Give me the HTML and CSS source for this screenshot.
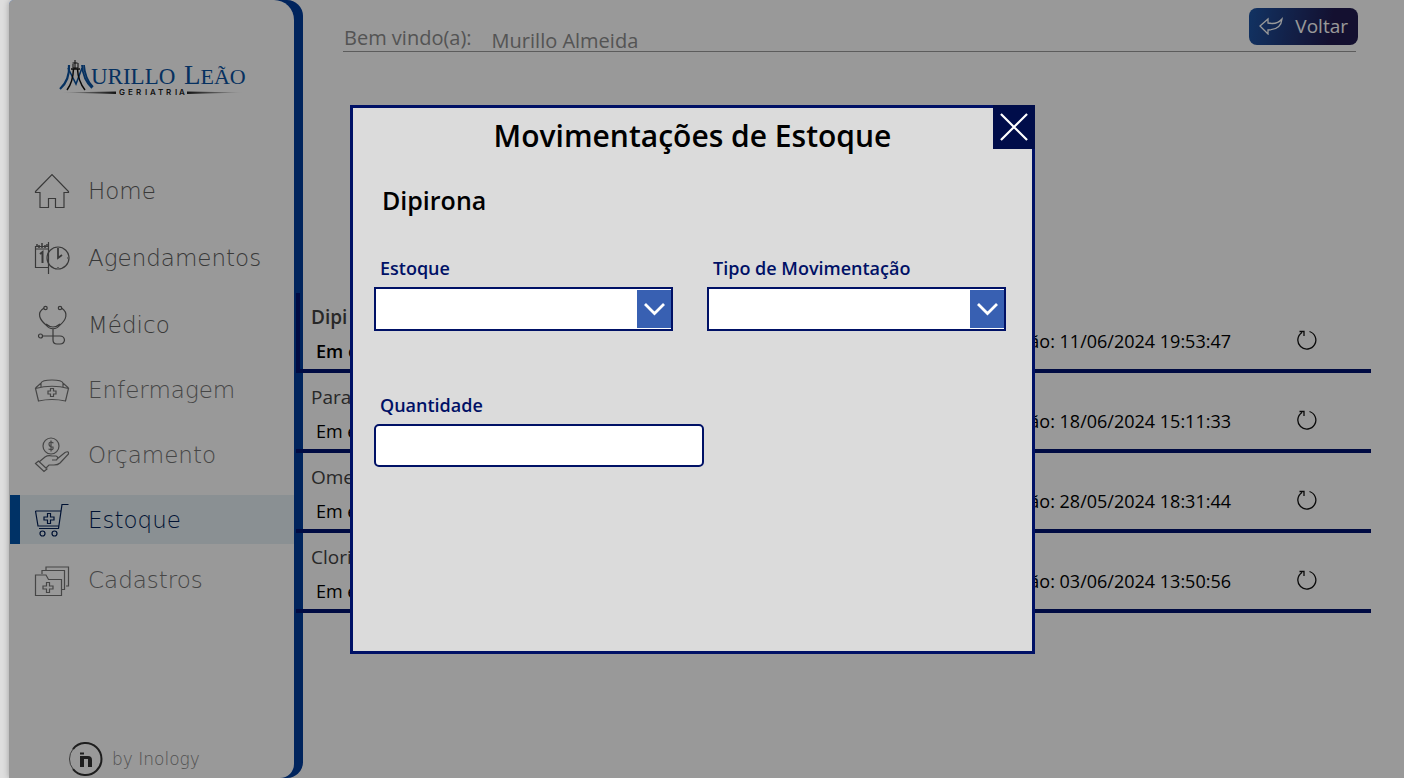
FILE: index.html
```html
<!DOCTYPE html>
<html lang="pt-BR">
<head>
<meta charset="utf-8">
<title>Movimentações de Estoque</title>
<meta name="viewport" content="width=device-width, initial-scale=1">
<link rel="stylesheet" href="styles.css">
</head>
<body>
<div class="app">
  <aside class="sidebar">
    <div class="panel">
      <svg class="logo" viewBox="0 0 190 42" role="img" aria-label="Murillo Leão Geriatria">
        <defs>
          <linearGradient id="fadeL"><stop offset="0" stop-color="#222" stop-opacity="0"/><stop offset="1" stop-color="#222"/></linearGradient>
          <linearGradient id="fadeR"><stop offset="0" stop-color="#222"/><stop offset="1" stop-color="#222" stop-opacity="0"/></linearGradient>
        </defs>
        <g fill="none" stroke="#0a52a0">
          <path d="M2 33Q12 24 11 9" stroke-width="2.2"/>
          <path d="M10 12L18 28L24 12" stroke-width="1.6"/>
          <path d="M24 9Q25 24 34 32M26 9Q27 23 35 31" stroke-width="1.8"/>
        </g>
        <g fill="none" stroke="#111">
          <path d="M17 4V13M14.500 7H19.500M15 8V12H20V7" stroke-width="1"/>
          <path d="M13 13H22M15.500 13Q15 26 9 34M19.500 13Q20 25 27 34" stroke-width="1.500"/>
        </g>
        <text class="logo-name" x="33" y="28" font-size="23">URILLO</text>
        <text class="logo-name" x="126" y="28" font-size="27">L<tspan font-size="22">EÃO</tspan></text>
        <path d="M2 36.500L58 35.500V38Z" fill="url(#fadeL)"/>
        <path d="M129 35.500L186 36.500L129 38Z" fill="url(#fadeR)"/>
        <text class="logo-sub" y="39" x="61 70 78 87 92 100 108 117 121">GERIATRIA</text>
      </svg>
      <nav class="nav">
        <a class="link dark" href="#"><svg viewBox="0 0 36 36"><path d="M1.500 18.500L18 1.500L34.500 18.500V19.500H30V34.500H21.500V25.500H14.500V34.500H6V19.500H1.500Z"/></svg>Home</a>
        <a class="link dark" href="#"><svg viewBox="0 0 36 36"><path d="M14 6.500H1.500V27.500H14M2 9H14M14.500 2V34"/><path d="M3 7V4M5 8V5M8 8V3M11 8V5M13 7V4" stroke-width="1.500"/><path d="M6 14L8.500 12V23" stroke-width="2"/><circle cx="24" cy="18" r="11"/><path d="M24 8V18L28 15" stroke-width="1.800"/><path d="M34 18H33M24 28V27M15 18H14"/></svg>Agendamentos</a>
        <a class="link dark" href="#"><svg class="tall" viewBox="0 0 36 42"><circle cx="11.500" cy="4" r="1.700"/><circle cx="26" cy="4" r="1.700"/><path d="M10 4C2 9 6 16 12 21C16 26 22 26 26 21C32 16 35 9 27.500 4M12 20Q19 26 26 20M19 25V36Q19 40 23 40H26Q30 40 30.500 36Q30 32 26 32H8"/><circle cx="6.500" cy="32" r="2"/></svg>Médico</a>
        <a class="link" href="#"><svg viewBox="0 0 36 36"><path d="M4.500 29L1.500 16.500Q18 12 34.500 16.500L31.500 29Q18 26 4.500 29ZM1.500 16L7 11V15M34.500 16L29 11V15M7 11Q8 8 18 8T29 11"/><path d="M16.500 16.500H19.500V19H22V22H19.500V24.500H16.500V22H14V19H16.500Z"/></svg>Enfermagem</a>
        <a class="link" href="#"><svg viewBox="0 0 36 36"><circle cx="17" cy="9" r="8"/><path d="M19.500 6Q15 4 15 7T19 10Q20 14 14.500 12M17 3.500V14.500"/><path d="M1.500 26.500L4.500 24L13 32L10 34.500ZM5 25L11 20Q14 18 18 19H22Q25 20 22.500 23H18M23 22L31 15.500Q35 13.500 34.500 17L26 26Q24 28 20 28H15L12 31"/></svg>Orçamento</a>
        <a class="link active" href="#" aria-current="page"><svg viewBox="0 0 36 36"><path d="M34.500 2.500H28L24.500 26.500H5M1.500 9H27M1.500 9L4 24H25"/><path d="M13.500 11.500H16.500V15H20V18H16.500V21.500H13.500V18H10V15H13.500Z"/><circle cx="8.500" cy="31.500" r="2.500"/><circle cx="20.500" cy="31.500" r="2.500"/></svg>Estoque</a>
        <a class="link" href="#"><svg viewBox="0 0 36 36"><path d="M1.500 33.500V13H12L14.500 17.500H27.500V33.500ZM8 12V8.500H30.500V27.500H28M12 8V5H34.500V24H32"/><path d="M12.500 20.500H15.500V24H19V27H15.500V30.500H12.500V27H9V24H12.500Z"/></svg>Cadastros</a>
      </nav>
      <div class="credit">
        <svg viewBox="0 0 36 36" aria-hidden="true"><path d="M5 8A16 16 0 1 1 5 28" fill="none" stroke="#333" stroke-width="2"/><path d="M5 8A16 16 0 0 0 5 28" fill="none" stroke="#666" stroke-width="1"/><path d="M12 15H16V26H12ZM12 11.500H16V13.500H12ZM16 15H20Q24 15 24 19V26H20V18H16Z" fill="#333"/></svg>
        <span>by Inology</span>
      </div>
    </div>
  </aside>
  <main class="main">
    <header class="top">
      <span>Bem vindo(a):</span>
      <span class="user">Murillo Almeida</span>
      <button class="back" type="button"><svg viewBox="0 0 24 18" aria-hidden="true"><path d="M1 9L9 2V6Q18 8 23 2Q22 13 9 13V17Z"/></svg>Voltar</button>
    </header>
    <ul class="stock">
      <li class="row selected"><div><h3>Dipi</h3><p>Em e</p></div><span class="date">ão: 11/06/2024 19:53:47</span><button class="refresh" type="button" aria-label="Atualizar"><svg viewBox="0 0 20 20"><path d="M12.500 1.500A9 9 0 1 1 5 2.500M2.500 1.500H7V6"/></svg></button></li>
      <li class="row"><div><h3>Para</h3><p>Em e</p></div><span class="date">ão: 18/06/2024 15:11:33</span><button class="refresh" type="button" aria-label="Atualizar"><svg viewBox="0 0 20 20"><path d="M12.500 1.500A9 9 0 1 1 5 2.500M2.500 1.500H7V6"/></svg></button></li>
      <li class="row"><div><h3>Ome</h3><p>Em e</p></div><span class="date">ão: 28/05/2024 18:31:44</span><button class="refresh" type="button" aria-label="Atualizar"><svg viewBox="0 0 20 20"><path d="M12.500 1.500A9 9 0 1 1 5 2.500M2.500 1.500H7V6"/></svg></button></li>
      <li class="row"><div><h3>Clori</h3><p>Em e</p></div><span class="date">ão: 03/06/2024 13:50:56</span><button class="refresh" type="button" aria-label="Atualizar"><svg viewBox="0 0 20 20"><path d="M12.500 1.500A9 9 0 1 1 5 2.500M2.500 1.500H7V6"/></svg></button></li>
    </ul>
  </main>
  <div class="overlay">
    <section class="modal" role="dialog" aria-labelledby="title">
      <button class="close" type="button" aria-label="Fechar"><svg viewBox="0 0 30 30"><path d="M1 1L29 29M29 1L1 29"/></svg></button>
      <h1 id="title">Movimentações de Estoque</h1>
      <h2>Dipirona</h2>
      <form class="form">
        <div class="field">
          <label for="estoque">Estoque</label>
          <div class="select">
            <select id="estoque"><option></option></select>
            <svg viewBox="0 0 34 38" aria-hidden="true"><path d="M8 14L17.500 23.500L27 14"/></svg>
          </div>
        </div>
        <div class="field">
          <label for="tipo">Tipo de Movimentação</label>
          <div class="select">
            <select id="tipo"><option></option></select>
            <svg viewBox="0 0 34 38" aria-hidden="true"><path d="M8 14L17.500 23.500L27 14"/></svg>
          </div>
        </div>
        <div class="field wide">
          <label for="quantidade">Quantidade</label>
          <input id="quantidade" type="text">
        </div>
      </form>
    </section>
  </div>
</div>
</body>
</html>
```
FILE: styles.css
```css
* { box-sizing: border-box; }

body {
  margin: 0;
  background: #dedede;
  font-family: "Open Sans", "Noto Sans", sans-serif;
  color: #000;
}

h1, h2, h3, p, ul { margin: 0; padding: 0; }
button { font: inherit; cursor: pointer; }

.app {
  position: relative;
  display: flex;
  min-height: 100vh;
  margin-left: 9px;
  background: #fff;
  border-top-left-radius: 5px;
  box-shadow: 0 0 6px rgba(0, 0, 0, .3);
  overflow: hidden;
}

/* Sidebar */
.sidebar {
  display: flex;
  flex: 0 0 294px;
  padding-right: 9px;
  background: #003c9c;
  border-radius: 0 16px 16px 0;
}

.panel {
  display: flex;
  flex: 1;
  flex-direction: column;
  background: #fff;
  border-radius: 0 20px 14px 0;
}

.logo {
  width: 190px;
  height: 42px;
  margin: 56px 0 0 49px;
}

.logo-name { font-family: "Liberation Serif", serif; fill: #0a52a0; }
.logo-sub { font: 600 8px Inter, sans-serif; fill: #222; }

.nav {
  display: grid;
  grid-template-rows: 66px 67px 67px 64px 65px 65px 56px;
  align-items: center;
  margin: 60px 0 0 1px;
}

.link {
  display: flex;
  align-items: center;
  gap: 18px;
  height: 49px;
  padding-left: 24px;
  color: #757575;
  font: 200 23px "DejaVu Sans Light", "DejaVu Sans", sans-serif;
  text-decoration: none;
}

.link svg {
  width: 36px;
  height: 36px;
  fill: none;
  stroke: currentColor;
  stroke-width: 1.2;
}

.link svg.tall { height: 42px; }
.link.dark { color: #606060; }

.link.active {
  padding-left: 14px;
  border-left: 10px solid #0054aa;
  background: #e7f0f6;
  color: #001f55;
}

.credit {
  display: flex;
  align-items: center;
  gap: 8px;
  margin-top: auto;
  padding: 0 0 1px 59px;
  color: #888;
  font: 200 17px/20px "DejaVu Sans Light", "DejaVu Sans", sans-serif;
}

.credit svg { width: 36px; height: 36px; }

/* Main area */
.main { flex: 1; min-width: 0; }

.top {
  display: flex;
  align-items: flex-start;
  height: 52px;
  margin: 0 48px 0 40px;
  padding-top: 8px;
  border-bottom: 1px solid #999;
  color: #8c8c8c;
  font-size: 20px;
  line-height: 28px;
}

.top span { padding: 16px 0 0 1px; }
.top .user { padding: 19px 0 0 20px; }

.back {
  display: flex;
  align-items: center;
  gap: 12px;
  height: 37px;
  margin: 0 -2px 0 auto;
  padding: 0 10px 2px;
  border: 0;
  border-radius: 8px;
  background: linear-gradient(100deg, #1d55a5, #221b50 75%);
  color: #fff;
  font-size: 19px;
}

.back svg { width: 24px; height: 18px; fill: none; stroke: #fff; stroke-width: 1.3; }

.stock {
  position: relative;
  margin: 241px 33px 0 -7px;
  list-style: none;
}

.row {
  display: flex;
  align-items: center;
  height: 80px;
  padding: 6px 52px 0 15px;
  border-bottom: 4px solid #001370;
  font-size: 18px;
}

.row h3 {
  color: #444;
  font-size: 19px;
  font-weight: 400;
  line-height: 34px;
}

.row p { padding-left: 5px; line-height: 34px; }

.row.selected {
  padding-left: 11px;
  border-left: 4px solid #001370;
}

.selected h3, .selected p { font-weight: 600; }
.date { margin: 14px 64px 0 auto; }

.refresh {
  display: flex;
  width: 24px;
  margin-top: 12px;
  padding: 2px;
  border: 0;
  background: none;
}

.refresh svg { width: 20px; height: 20px; fill: none; stroke: #111; stroke-width: 1.3; }

/* Dialog */
.overlay {
  position: absolute;
  inset: 0;
  display: flex;
  align-items: flex-start;
  justify-content: center;
  padding: 105px 28px 0 0;
  background: rgba(0, 0, 0, .4);
}

.modal {
  position: relative;
  width: 685px;
  min-height: 549px;
  padding: 7px 26px 24px 21px;
  border: 3px solid #001166;
  background: #dbdbdb;
}

.modal h1 {
  margin-left: 5px;
  font-size: 30px;
  font-weight: 600;
  line-height: 42px;
  text-align: center;
}

.modal h2 {
  margin: 25px 0 0 8px;
  font-size: 25px;
  font-weight: 600;
  line-height: 36px;
}

.close {
  position: absolute;
  top: -3px;
  right: -3px;
  display: flex;
  padding: 8px 6px;
  border: 0;
  background: #000d4a;
}

.close svg { width: 30px; height: 28px; stroke: #fff; stroke-width: 2.4; }

.form {
  display: grid;
  grid-template-columns: 1fr 1fr;
  gap: 62px 34px;
  margin-top: 38px;
}

.field { display: flex; flex-direction: column; gap: 7px; }

.field label {
  padding-left: 6px;
  color: #001166;
  font-size: 18px;
  font-weight: 600;
  line-height: 24px;
}

.field.wide { grid-column: 1 / -1; }

.select { display: grid; }

.select select {
  grid-area: 1 / 1;
  height: 44px;
  padding: 0 44px 0 10px;
  border: 2px solid #001166;
  border-radius: 0;
  background: #fff;
  font: inherit;
  appearance: none;
}

.select svg {
  grid-area: 1 / 1;
  justify-self: end;
  width: 34px;
  height: 38px;
  margin: 3px 2px;
  background: #3860b2;
  fill: none;
  stroke: #fff;
  stroke-width: 2.8;
  pointer-events: none;
}

.field input {
  width: 330px;
  height: 43px;
  padding: 0 10px;
  border: 2px solid #001166;
  border-radius: 5px;
  background: #fff;
  font: inherit;
}
```
